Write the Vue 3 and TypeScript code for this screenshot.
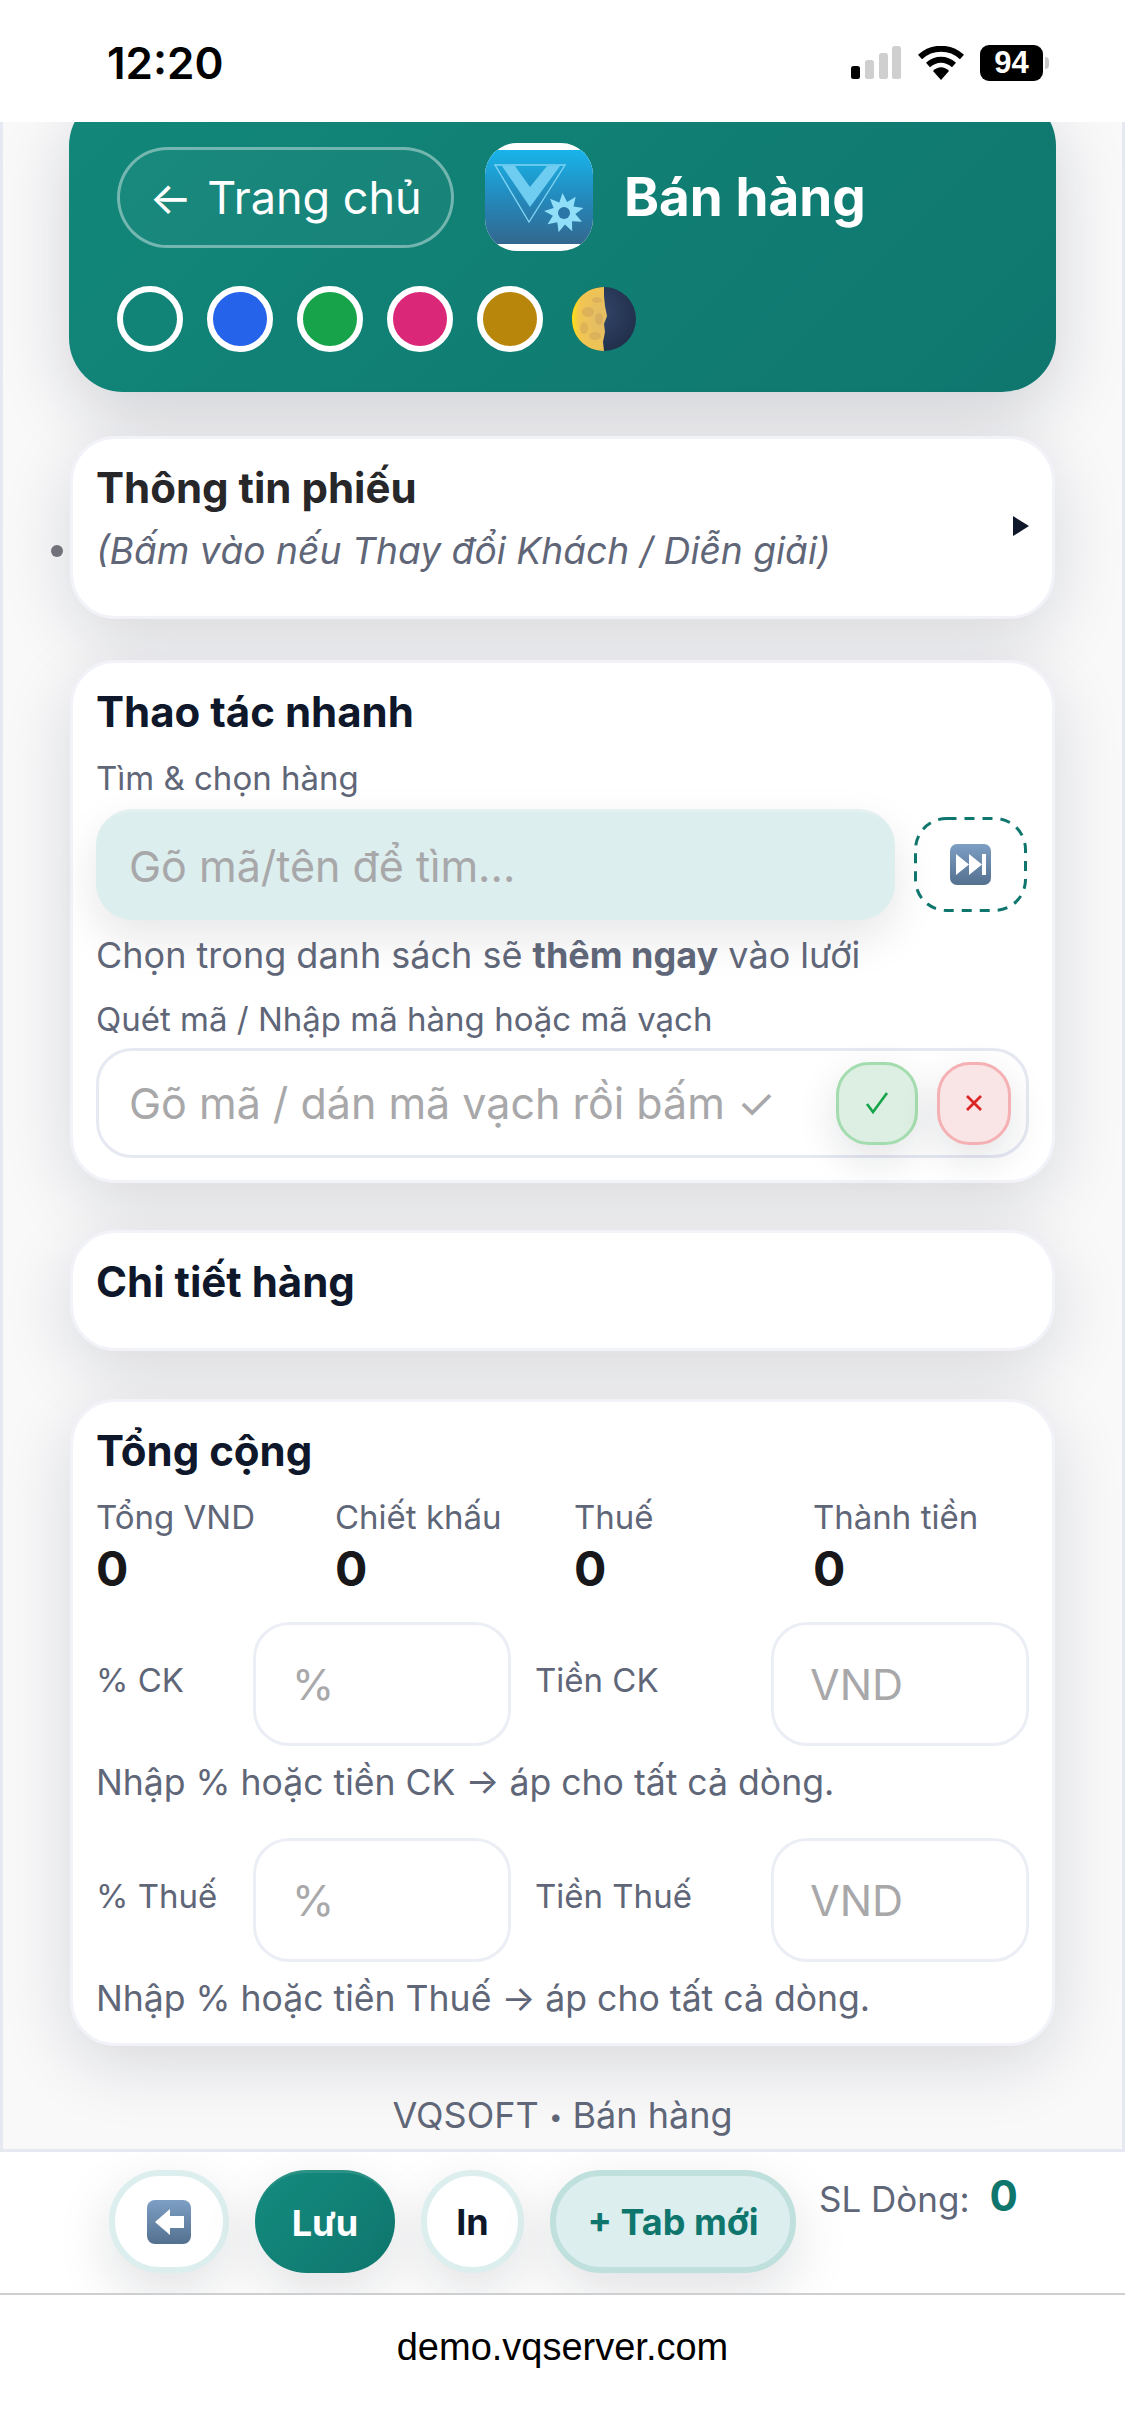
<script setup lang="ts">
const swatches = ['#128477', '#2563eb', '#16a34a', '#db2777', '#b8860b']
const totals = ['Tổng VND', 'Chiết khấu', 'Thuế', 'Thành tiền']
const craters = [
  { x: 26, y: 14, rx: 5, ry: 3 },
  { x: 17, y: 26, rx: 6, ry: 5 },
  { x: 28, y: 33, rx: 4, ry: 6 },
  { x: 13, y: 42, rx: 4, ry: 6 },
  { x: 24, y: 50, rx: 6, ry: 4 },
]
const gearPoints = (() => {
  const pts: string[] = []
  for (let i = 0; i < 18; i++) {
    const r = i % 2 === 0 ? 20 : 11.5
    const a = (i * Math.PI) / 9 - 0.25
    pts.push(`${(79 + r * Math.cos(a)).toFixed(1)},${(70 + r * Math.sin(a)).toFixed(1)}`)
  }
  return pts.join(' ')
})()
</script>

<template>
  <div class="screen">
    <header class="status">
      <span class="time">12:20</span>
      <div class="status-icons">
        <svg class="signal" width="50" height="34" viewBox="0 0 50 34">
          <rect x="0" y="20" width="9" height="13" rx="2.5" fill="#000" />
          <rect x="14" y="14" width="9" height="19" rx="2.5" fill="#cfcfcf" />
          <rect x="28" y="7" width="9" height="26" rx="2.5" fill="#cfcfcf" />
          <rect x="41" y="0" width="9" height="33" rx="2.5" fill="#cfcfcf" />
        </svg>
        <svg class="wifi" width="46" height="34" viewBox="0 0 46 34">
          <path d="M2 11C14 0 32 0 44 11" fill="none" stroke="#000" stroke-width="6" />
          <path d="M10 19C18 12 28 12 36 19" fill="none" stroke="#000" stroke-width="6" />
          <path d="M15 25C20 20 26 20 31 25L23 34Z" fill="#000" />
        </svg>
        <div class="battery"><span>94</span></div>
        <i class="nub"></i>
      </div>
    </header>

    <main class="page">
      <section class="hero">
        <div class="hero-top">
          <button class="back"><span class="back-arrow">←</span><span>Trang chủ</span></button>
          <svg class="logo" width="108" height="108" viewBox="0 0 108 108">
            <defs>
              <linearGradient id="logoBg" x1="0" y1="0" x2="0" y2="1">
                <stop offset="0" stop-color="#18b4ea" />
                <stop offset="0.55" stop-color="#2586b8" />
                <stop offset="1" stop-color="#33688f" />
              </linearGradient>
              <clipPath id="logoClip"><rect width="108" height="108" rx="32" /></clipPath>
            </defs>
            <g clip-path="url(#logoClip)">
              <rect width="108" height="108" fill="#fff" />
              <rect y="7" width="108" height="94" fill="url(#logoBg)" />
            </g>
            <path d="M10 22H80L44 79Z" fill="none" stroke="#7fd3f2" stroke-width="1.4" />
            <path d="M17 23H30L45 44L62 23H75L45 64Z" fill="#6fcdf2" />
            <polygon :points="gearPoints" fill="#90def8" />
            <circle cx="79" cy="70" r="6" fill="#2a76a6" />
          </svg>
          <h1>Bán hàng</h1>
        </div>
        <div class="swatches">
          <span v-for="c in swatches" :key="c" class="swatch" :style="{ background: c }"></span>
          <svg class="moon" width="66" height="66" viewBox="0 0 66 66">
            <defs>
              <radialGradient id="moonLit" cx="0.8" cy="0.5" r="0.85">
                <stop offset="0" stop-color="#e2bb68" />
                <stop offset="0.72" stop-color="#f2c650" />
                <stop offset="1" stop-color="#ffe600" />
              </radialGradient>
              <radialGradient id="moonDark" cx="0.4" cy="0.4" r="0.8">
                <stop offset="0" stop-color="#33466c" />
                <stop offset="1" stop-color="#1d2a42" />
              </radialGradient>
            </defs>
            <circle cx="33" cy="33" r="32" fill="url(#moonDark)" />
            <path d="M33 1C15 1 1 15 1 33S15 65 33 65L32 56 34 46 33 38 36 30 34 20 33 10Z" fill="url(#moonLit)" />
            <ellipse v-for="(m, i) in craters" :key="i" :cx="m.x" :cy="m.y" :rx="m.rx" :ry="m.ry" fill="#c99f58" opacity="0.45" />
          </svg>
        </div>
      </section>

      <section class="card card-info">
        <div class="info-text">
          <h2 class="info-title">Thông tin phiếu</h2>
          <p class="info-sub">(Bấm vào nếu Thay đổi Khách / Diễn giải)</p>
        </div>
        <i class="caret"></i>
      </section>

      <section class="card card-quick">
        <h2>Thao tác nhanh</h2>
        <label class="field-label first">Tìm &amp; chọn hàng</label>
        <div class="search-row">
          <input class="search" placeholder="Gõ mã/tên để tìm..." />
          <button class="skip">
            <svg class="skip-frame" width="113" height="95" viewBox="0 0 113 95">
              <rect x="1.500" y="1.500" width="110" height="92" rx="31" fill="none" stroke="#0f766e" stroke-width="3" stroke-dasharray="10 8" />
            </svg>
            <svg width="41" height="41" viewBox="0 0 41 41">
              <defs>
                <linearGradient id="keyBg" x1="0" y1="0" x2="0" y2="1">
                  <stop offset="0" stop-color="#7d9fc4" />
                  <stop offset="1" stop-color="#54708f" />
                </linearGradient>
              </defs>
              <rect width="41" height="41" rx="7" fill="url(#keyBg)" />
              <path d="M6 10L19 20.500L6 31ZM19 10L32 20.500L19 31Z" fill="#fff" />
              <rect x="32" y="10" width="4" height="21" fill="#fff" />
            </svg>
          </button>
        </div>
        <p class="hint hint-add">Chọn trong danh sách sẽ <b>thêm ngay</b> vào lưới</p>
        <label class="field-label second">Quét mã / Nhập mã hàng hoặc mã vạch</label>
        <div class="scan">
          <input class="scan-input" placeholder="Gõ mã / dán mã vạch rồi bấm ✓" />
          <button class="mini ok">
            <svg width="24" height="24" viewBox="0 0 24 24"><path d="M2 13L8 21L22 2" fill="none" stroke="#16a34a" stroke-width="2.600" /></svg>
          </button>
          <button class="mini no">
            <svg width="18" height="18" viewBox="0 0 18 18"><path d="M2 2L16 16M16 2L2 16" fill="none" stroke="#dc2626" stroke-width="2.800" /></svg>
          </button>
        </div>
      </section>

      <section class="card card-detail">
        <h2>Chi tiết hàng</h2>
      </section>

      <section class="card card-total">
        <h2>Tổng cộng</h2>
        <div class="totals">
          <div v-for="t in totals" :key="t">
            <div class="total-label">{{ t }}</div>
            <div class="total-value">0</div>
          </div>
        </div>
        <div class="adjust">
          <span class="adj-label">% CK</span>
          <input class="adj-input" placeholder="%" />
          <span class="adj-label">Tiền CK</span>
          <input class="adj-input" placeholder="VND" />
        </div>
        <p class="hint adj-hint">Nhập % hoặc tiền CK → áp cho tất cả dòng.</p>
        <div class="adjust second-row">
          <span class="adj-label">% Thuế</span>
          <input class="adj-input" placeholder="%" />
          <span class="adj-label">Tiền Thuế</span>
          <input class="adj-input" placeholder="VND" />
        </div>
        <p class="hint adj-hint">Nhập % hoặc tiền Thuế → áp cho tất cả dòng.</p>
      </section>

      <p class="footer">VQSOFT <span class="dot">•</span> Bán hàng</p>
    </main>

    <nav class="bar">
      <button class="pill pill-back">
        <svg width="44" height="44" viewBox="0 0 44 44">
          <defs>
            <linearGradient id="backBg" x1="0" y1="0" x2="0" y2="1">
              <stop offset="0" stop-color="#7d9fc4" />
              <stop offset="1" stop-color="#54708f" />
            </linearGradient>
          </defs>
          <rect width="44" height="44" rx="8" fill="url(#backBg)" />
          <path d="M8 22L23 9V16H37V28H23V35Z" fill="#fff" />
        </svg>
      </button>
      <button class="pill pill-save">Lưu</button>
      <button class="pill pill-print">In</button>
      <button class="pill pill-tab">+ Tab mới</button>
      <div class="count">
        <span>SL Dòng:</span>
        <b>0</b>
      </div>
    </nav>

    <footer class="url">demo.vqserver.com</footer>
  </div>
</template>

<style>
html,
body {
  margin: 0;
  background: #fff;
}
</style>

<style scoped>
.screen {
  width: 1125px;
  height: 2436px;
  display: flex;
  flex-direction: column;
  overflow: hidden;
  background: #fff;
  font-family: Inter, "Noto Sans", sans-serif;
  color: #0f172a;
}

.status {
  height: 122px;
  flex: none;
  display: flex;
  justify-content: space-between;
  align-items: flex-start;
  padding: 0 76px 0 107px;
  box-sizing: border-box;
}

.time {
  margin-top: 36px;
  font-size: 44px;
  line-height: 54px;
  color: #000;
  font-weight: 600;
}

.status-icons {
  margin-top: 45px;
  display: flex;
  align-items: center;
  height: 36px;
}

.wifi {
  margin-left: 17px;
}

.battery {
  margin-left: 16px;
  width: 63px;
  height: 36px;
  border-radius: 9px;
  background: #000;
  color: #fff;
  font-size: 31px;
  font-weight: 700;
  font-family: "Liberation Sans", sans-serif;
  display: flex;
  align-items: center;
  justify-content: center;
}

.nub {
  width: 4px;
  height: 12px;
  margin-left: 2px;
  border-radius: 0 4px 4px 0;
  background: #c9c9c9;
}

.page {
  height: 2030px;
  flex: none;
  box-sizing: border-box;
  overflow: hidden;
  padding: 0 67px;
  border: solid #e6e8f2;
  border-width: 0 3px 3px;
  background: #f9f9fa;
}

.hero {
  margin: -30px -1px 0;
  padding: 51px 48px 40px;
  border-radius: 54px;
  color: #fff;
  background: linear-gradient(135deg, #12877a, #0f766e);
  box-shadow: 0 24px 70px rgba(15, 23, 42, 0.17);
}

.hero-top {
  display: flex;
  align-items: center;
  gap: 31px;
}

.back {
  height: 101px;
  width: 337px;
  box-sizing: border-box;
  border: 3px solid rgba(255, 255, 255, 0.4);
  border-radius: 51px;
  background: rgba(255, 255, 255, 0.03);
  color: #fff;
  font: 400 45px/1 Inter, sans-serif;
  white-space: nowrap;
  padding: 0;
  display: flex;
  align-items: center;
  justify-content: center;
  gap: 15px;
}

.logo {
  flex: none;
}

h1 {
  margin: 0;
  font-size: 53px;
  line-height: 64px;
  font-weight: 700;
}

.swatches {
  margin-top: 35px;
  display: flex;
  gap: 24px;
}

.swatch {
  width: 66px;
  height: 66px;
  box-sizing: border-box;
  border: 6px solid #fff;
  border-radius: 50%;
}

.moon {
  margin-left: 4px;
}

.card {
  box-sizing: border-box;
  margin-top: 47px;
  padding: 22px 23px 20px;
  border: 3px solid #f2f3f8;
  border-radius: 45px;
  background: #fff;
  box-shadow: 0 18px 70px rgba(15, 23, 42, 0.14);
}

h2 {
  margin: 0;
  font-size: 42px;
  line-height: 54px;
  font-weight: 700;
}

.card-info {
  margin-top: 44px;
  height: 183px;
  display: flex;
  justify-content: space-between;
  align-items: center;
}

.info-text {
  align-self: flex-start;
}

.info-title {
  color: #27272a;
}

.info-sub {
  position: relative;
  margin: 6px 0 0;
  font-size: 37.200px;
  line-height: 60px;
  font-style: italic;
  color: #5f6678;
}

.info-sub::before {
  content: "";
  position: absolute;
  left: -45px;
  top: 24px;
  width: 12px;
  height: 12px;
  border-radius: 50%;
  background: #71717a;
}

.caret {
  width: 0;
  height: 0;
  margin-top: -6px;
  border-left: 16px solid #0f172a;
  border-top: 10px solid transparent;
  border-bottom: 10px solid transparent;
}

.card-quick {
  margin-top: 41px;
  padding-bottom: 22px;
}

.field-label {
  display: block;
  font-size: 33px;
  line-height: 48px;
  color: #5f6678;
}

.first {
  margin-top: 15px;
}

.second {
  margin-top: 16px;
}

.search-row {
  margin-top: 7px;
  display: flex;
  align-items: center;
  gap: 19px;
}

input {
  box-sizing: border-box;
  min-width: 0;
  margin: 0;
  outline: none;
  font-family: Inter, sans-serif;
  font-size: 43px;
  color: #0f172a;
}

input::placeholder {
  color: #a8a8aa;
  opacity: 1;
}

.search {
  width: 799px;
  height: 111px;
  padding: 0 33px;
  border: 0;
  border-top: 3px solid #e4f1f0;
  border-radius: 36px;
  background: #dceeed;
  box-shadow: 0 18px 44px rgba(15, 23, 42, 0.1);
}

.skip {
  position: relative;
  width: 113px;
  height: 95px;
  padding: 0;
  border: 0;
  background: transparent;
  display: flex;
  align-items: center;
  justify-content: center;
}

.skip-frame {
  position: absolute;
  inset: 0;
}

.hint {
  margin: 0;
  font-size: 36px;
  line-height: 48px;
  color: #5f6678;
}

.hint-add {
  margin-top: 11px;
}

.hint b {
  font-weight: 700;
}

.scan {
  margin-top: 5px;
  height: 110px;
  box-sizing: border-box;
  display: flex;
  align-items: center;
  gap: 19px;
  padding-right: 15px;
  border: 3px solid #e6e8f2;
  border-radius: 36px;
  background: #fff;
}

.scan-input {
  flex: 1;
  height: 100%;
  padding: 0 0 0 30px;
  border: 0;
  background: transparent;
}

.mini {
  height: 83px;
  padding: 0;
  box-sizing: border-box;
  border-radius: 33px;
  display: flex;
  align-items: center;
  justify-content: center;
  box-shadow: 0 14px 40px rgba(15, 23, 42, 0.12);
}

.ok {
  width: 82px;
  border: 3px solid #a3dcae;
  background: #dcefe2;
}

.no {
  width: 74px;
  border: 3px solid #f5b0b3;
  background: #fae5e6;
}

.card-detail {
  height: 121px;
}

.card-total {
  margin-top: 48px;
}

.totals {
  margin-top: 17px;
  display: grid;
  grid-template-columns: repeat(4, 239px);
}

.total-label {
  font-size: 33px;
  line-height: 45px;
  color: #5f6678;
}

.total-value {
  margin-top: 2px;
  font-size: 48px;
  line-height: 54px;
  font-weight: 700;
  color: #18181b;
}

.adjust {
  margin-top: 26px;
  display: grid;
  grid-template-columns: 133px 258px 212px 258px;
  column-gap: 24px;
  align-items: center;
}

.second-row {
  margin-top: 31px;
}

.adj-label {
  padding-bottom: 8px;
  font-size: 33px;
  line-height: 48px;
  color: #5f6678;
}

.adj-input {
  width: 258px;
  height: 124px;
  padding: 0 36px;
  border: 3px solid #eceef5;
  border-radius: 36px;
  background: #fff;
}

.adj-hint {
  margin-top: 13px;
  font-size: 35.600px;
}

.footer {
  margin: 45px 0 0;
  text-align: center;
  font-size: 36px;
  line-height: 48px;
  color: #5f6678;
}

.dot {
  font-size: 24px;
  vertical-align: 3px;
}

.bar {
  height: 143px;
  flex: none;
  box-sizing: border-box;
  padding: 18px 0 0 109px;
  display: flex;
  justify-content: flex-start;
  align-items: flex-start;
  gap: 26px;
  overflow: hidden;
  border-bottom: 2px solid #cfcfd1;
  background: #fff;
}

.pill {
  height: 103px;
  box-sizing: border-box;
  padding: 0;
  border-radius: 52px;
  font: 700 36px/1 Inter, sans-serif;
  display: flex;
  align-items: center;
  justify-content: center;
  box-shadow: 0 20px 56px rgba(15, 23, 42, 0.13);
}

.pill-back {
  width: 120px;
  border: 6px solid #dceeed;
  background: #fff;
}

.pill-save {
  width: 140px;
  border: 0;
  border-top: 3px solid #2a9184;
  background: linear-gradient(135deg, #148b7e, #0f766e);
  color: #fff;
}

.pill-print {
  width: 103px;
  border: 6px solid #dceeed;
  background: #fff;
  color: #0f172a;
}

.pill-tab {
  width: 246px;
  border: 6px solid #bfe0dd;
  background: #dceeed;
  color: #0f766e;
}

.count {
  display: flex;
  align-items: center;
  margin: 4px 0 0 -3px;
  gap: 20px;
  font-size: 35px;
  line-height: 50px;
  color: #5f6678;
}

.count b {
  margin-top: -6px;
  font-size: 42px;
  color: #0f766e;
}

.url {
  flex: 1;
  padding-top: 30px;
  text-align: center;
  font-family: "Liberation Sans", sans-serif;
  font-size: 38px;
  line-height: 44px;
  color: #000;
}
</style>
